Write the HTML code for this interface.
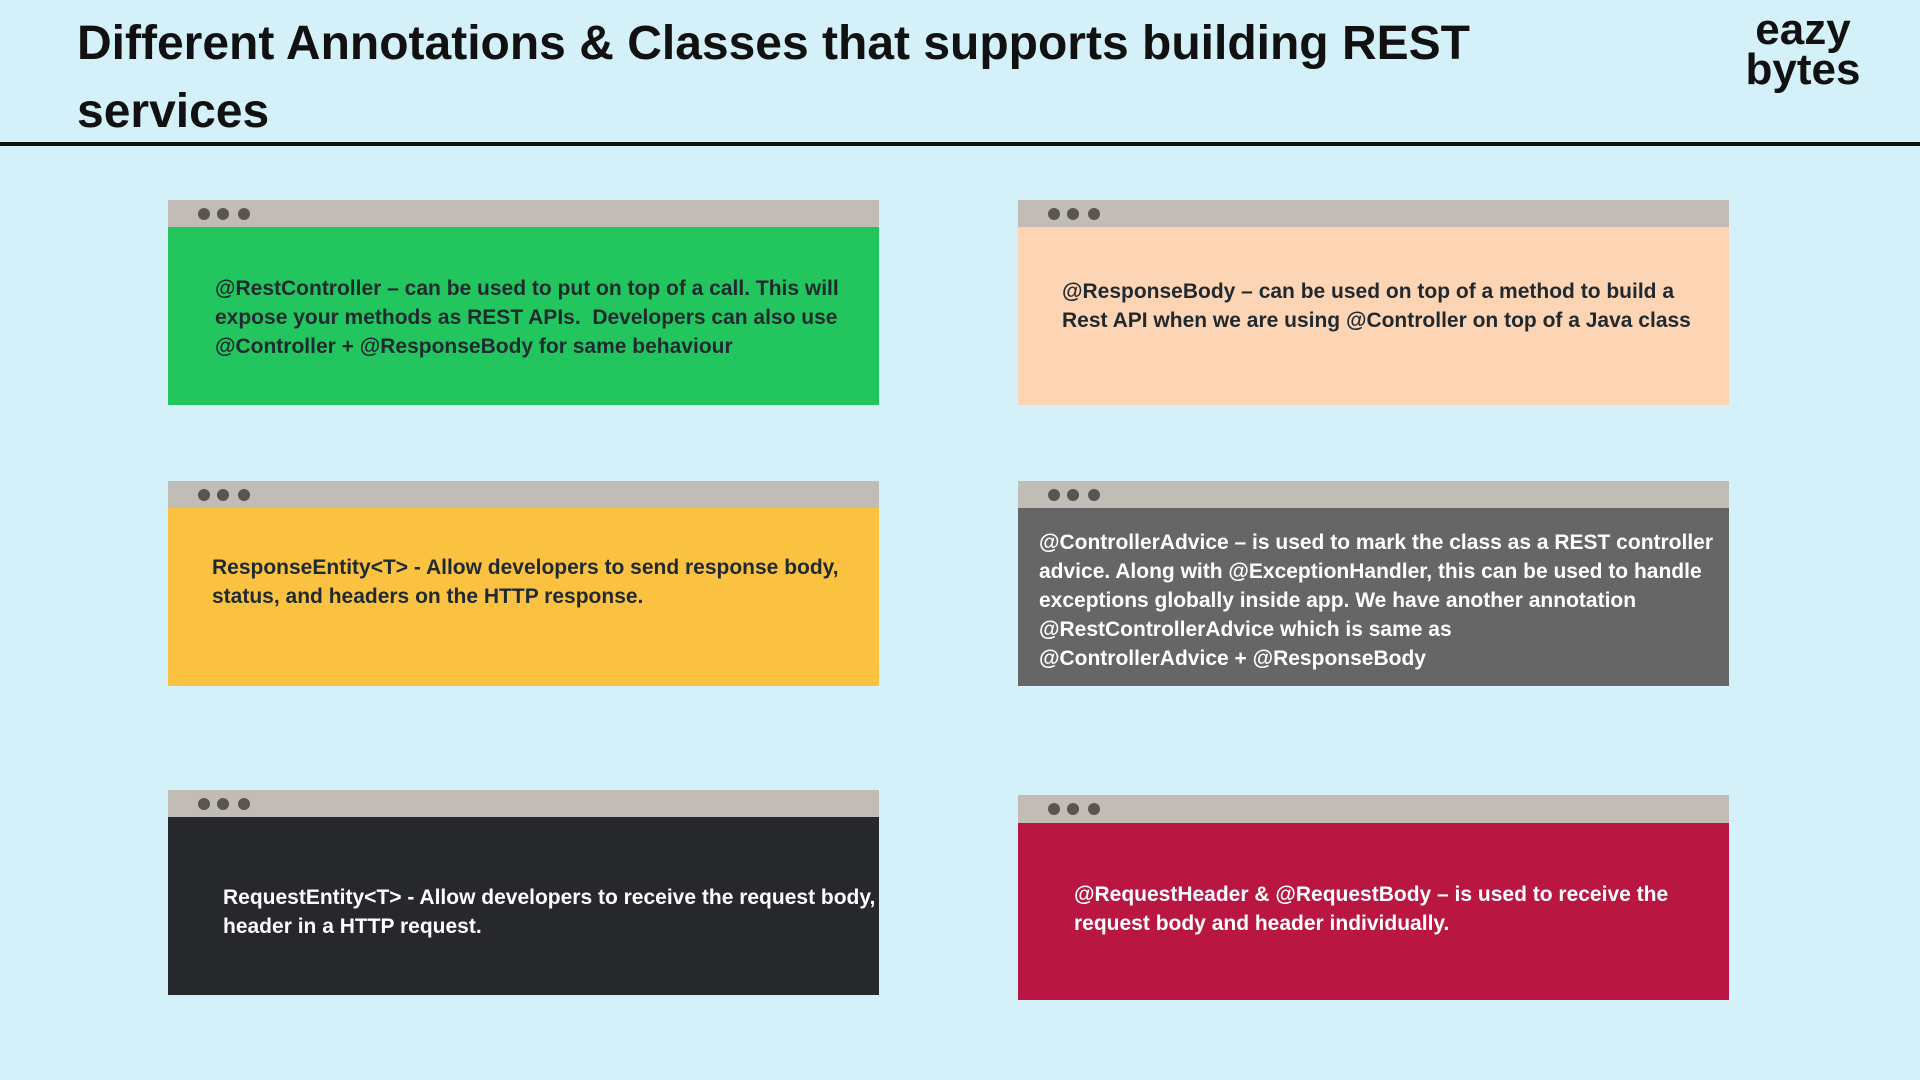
<!DOCTYPE html>
<html><head><meta charset="utf-8"><style>
body{margin:0;width:1920px;height:1080px;background:#d4f1fa;position:relative;overflow:hidden;font-family:"Liberation Sans",Arial,sans-serif}
.t{position:absolute;left:77px;top:10px;font-weight:bold;font-size:48px;line-height:68px;color:#111;white-space:nowrap}
.rule{position:absolute;left:0;top:142px;width:1920px;height:4px;background:#111}
.logo{position:absolute;left:1742px;top:10px;font-weight:bold;font-size:44px;line-height:40px;color:#111;text-align:center;width:122px}
.card{position:absolute;width:711px;height:205px}
.hd{height:27px;background:#c1bcb5;position:relative}
.hd i{position:absolute;top:8px;width:12px;height:12px;border-radius:50%;background:#5a5550}
.tx{position:absolute;font-weight:bold;font-size:21px;line-height:29px;white-space:nowrap}
</style></head><body>
<div class="t">Different Annotations &amp; Classes that supports building REST<br>services</div>
<div class="logo">eazy<br>bytes</div>
<div class="rule"></div>

<div class="card" style="left:168px;top:200px;background:#22c55e">
<div class="hd"><i style="left:30px"></i><i style="left:49px"></i><i style="left:70px"></i></div>
<div class="tx" style="left:47px;top:74px;color:#1f2a30">@RestController – can be used to put on top of a call. This will<br>expose your methods as REST APIs.&nbsp; Developers can also use<br>@Controller + @ResponseBody for same behaviour</div></div>

<div class="card" style="left:1018px;top:200px;background:#fed5b4">
<div class="hd"><i style="left:30px"></i><i style="left:49px"></i><i style="left:70px"></i></div>
<div class="tx" style="left:44px;top:77px;color:#1f2a30">@ResponseBody – can be used on top of a method to build a<br>Rest API when we are using @Controller on top of a Java class</div></div>

<div class="card" style="left:168px;top:481px;background:#fbc141">
<div class="hd"><i style="left:30px"></i><i style="left:49px"></i><i style="left:70px"></i></div>
<div class="tx" style="left:44px;top:72px;color:#1f2a30">ResponseEntity&lt;T&gt; - Allow developers to send response body,<br>status, and headers on the HTTP response.</div></div>

<div class="card" style="left:1018px;top:481px;background:#666666">
<div class="hd"><i style="left:30px"></i><i style="left:49px"></i><i style="left:70px"></i></div>
<div class="tx" style="left:21px;top:47px;color:#fff">@ControllerAdvice – is used to mark the class as a REST controller<br>advice. Along with @ExceptionHandler, this can be used to handle<br>exceptions globally inside app. We have another annotation<br>@RestControllerAdvice which is same as<br>@ControllerAdvice + @ResponseBody</div></div>

<div class="card" style="left:168px;top:790px;background:#27282b">
<div class="hd"><i style="left:30px"></i><i style="left:49px"></i><i style="left:70px"></i></div>
<div class="tx" style="left:55px;top:93px;color:#fff">RequestEntity&lt;T&gt; - Allow developers to receive the request body,<br>header in a HTTP request.</div></div>

<div class="card" style="left:1018px;top:795px;background:#b91641">
<div class="hd" style="height:28px"><i style="left:30px"></i><i style="left:49px"></i><i style="left:70px"></i></div>
<div class="tx" style="left:56px;top:85px;color:#fff">@RequestHeader &amp; @RequestBody – is used to receive the<br>request body and header individually.</div></div>
</body></html>
